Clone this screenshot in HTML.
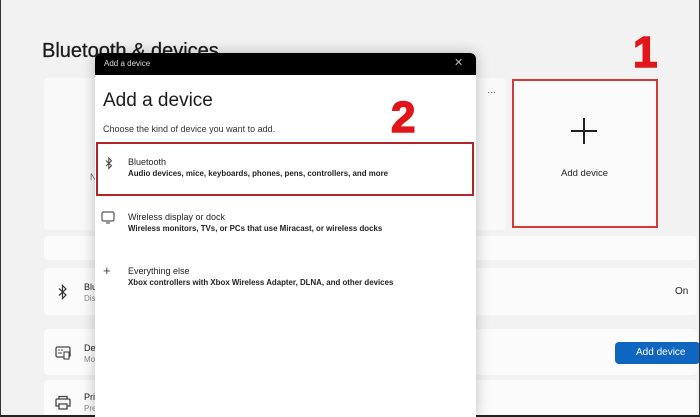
<!DOCTYPE html>
<html><head><style>
*{margin:0;padding:0;box-sizing:border-box}
body{width:700px;height:417px;overflow:hidden;background:#f2f2f2;font-family:"Liberation Sans",sans-serif;position:relative;color:#1b1b1b}
.a{position:absolute}
.card{position:absolute;background:#fbfbfb;border-radius:4px}
.sub{font-size:7.9px;font-weight:bold;color:#222}
.t{font-size:9px;color:#222}
.num{font-size:44px;font-weight:900;color:#e0161b;-webkit-text-stroke:1.5px #e0161b}
</style></head><body>
<div class="a" style="left:42px;top:40px;font-size:20px;color:#1b1b1b;-webkit-text-stroke:0.3px #1b1b1b">Bluetooth &amp; devices</div>
<div class="card" style="left:44px;top:78px;width:462px;height:152px;background:#f9f9f9"></div>
<div class="a" style="left:487px;top:87px;font-size:9px;color:#555">···</div>
<div class="a" style="left:90px;top:172px;font-size:9px;color:#666">N</div>
<div class="a" style="left:512px;top:79px;width:146px;height:149px;background:#fafafa;border:2px solid #d23b3b"></div>
<div class="a" style="left:571px;top:130px;width:26px;height:2px;background:#222"></div>
<div class="a" style="left:583px;top:118px;width:2px;height:26px;background:#222"></div>
<div class="a" style="left:561px;top:168px;font-size:9.5px;color:#222">Add device</div>
<div class="a num" style="left:633px;top:28px">1</div>
<div class="card" style="left:44px;top:236px;width:653px;height:24px"></div>
<div class="card" style="left:44px;top:268px;width:653px;height:47px"></div>
<div class="card" style="left:44px;top:329px;width:653px;height:46px"></div>
<div class="card" style="left:44px;top:380px;width:653px;height:37px"></div>
<svg class="a" style="left:58px;top:284px" width="10" height="16" viewBox="0 0 10 16"><path d="M1 4.5 L8 11 L4.5 14.5 V1.5 L8 5 L1 11.5" fill="none" stroke="#333" stroke-width="1.2"/></svg>
<div class="a" style="left:84px;top:282px;font-size:9px">Blu</div>
<div class="a" style="left:84px;top:294px;font-size:8px;color:#888">Dis</div>
<svg class="a" style="left:55px;top:346px" width="16" height="14" viewBox="0 0 16 14"><rect x="1" y="1" width="14" height="10" rx="1.5" fill="none" stroke="#444" stroke-width="1.3"/><rect x="9" y="6" width="5" height="7" fill="#fff" stroke="#444" stroke-width="1.1"/><path d="M3 4h2M6 4h2M3 7h4" stroke="#444"/></svg>
<div class="a" style="left:84px;top:343px;font-size:9px">De</div>
<div class="a" style="left:84px;top:355px;font-size:8px;color:#888">Mo</div>
<svg class="a" style="left:55px;top:395px" width="16" height="15" viewBox="0 0 16 15"><path d="M4 4V1.5h8V4M2 4h12a1 1 0 0 1 1 1v6h-3M4 11H1V5a1 1 0 0 1 1-1M4 9h8v5H4z" fill="none" stroke="#444" stroke-width="1.3"/></svg>
<div class="a" style="left:84px;top:392px;font-size:9px">Pri</div>
<div class="a" style="left:84px;top:404px;font-size:8px;color:#888">Pre</div>
<div class="a" style="left:675px;top:286px;font-size:10px;color:#222">On</div>
<div class="a" style="left:615px;top:342px;width:85px;height:22px;background:#0f66c0;border-radius:4px;color:#fff;font-size:10px;padding:5px 0 0 21px">Add device</div>
<div class="a" style="left:0;top:0;width:700px;height:417px;border-left:1px solid #333;border-right:1px solid #333;border-bottom:2px solid #222"></div>
<div class="a" style="left:95px;top:53px;width:381px;height:364px;background:#fff;border-radius:6px 6px 0 0;box-shadow:0 0 14px rgba(0,0,0,.25);overflow:hidden">
 <div style="height:22px;background:#000;color:#ddd;font-size:8px;padding:6px 0 0 9px">Add a device<span style="position:absolute;left:359px;top:3px;font-size:11px;color:#bbb">✕</span></div>
 <div class="a" style="left:8px;top:37px;font-size:19px;color:#1b1b1b">Add a device</div>
 <div class="a" style="left:8px;top:71px;font-size:9px;color:#333">Choose the kind of device you want to add.</div>
 <div class="a" style="left:1px;top:89px;width:378px;height:54px;border:2px solid #b3232a"></div>
 <svg class="a" style="left:10px;top:104px" width="8" height="13" viewBox="0 0 8 13"><path d="M1 3.5 L6.5 8.8 L3.8 11.5 V1 L6.5 3.8 L1 9" fill="none" stroke="#444" stroke-width="1"/></svg>
 <div class="a" style="left:33px;top:104px"><div class="t">Bluetooth</div><div class="sub" style="margin-top:2px">Audio devices, mice, keyboards, phones, pens, controllers, and more</div></div>
 <svg class="a" style="left:6px;top:158px" width="14" height="13" viewBox="0 0 14 13"><rect x="1" y="1" width="12" height="9" rx="1.5" fill="none" stroke="#555" stroke-width="1.2"/><path d="M5 12h4" stroke="#555" stroke-width="1.2"/></svg>
 <div class="a" style="left:33px;top:159px"><div class="t">Wireless display or dock</div><div class="sub" style="margin-top:2px">Wireless monitors, TVs, or PCs that use Miracast, or wireless docks</div></div>
 <div class="a" style="left:8px;top:210px;font-size:13px;color:#444">+</div>
 <div class="a" style="left:33px;top:213px"><div class="t">Everything else</div><div class="sub" style="margin-top:2px">Xbox controllers with Xbox Wireless Adapter, DLNA, and other devices</div></div>
 <div class="a num" style="left:296px;top:40px">2</div>
</div>
</body></html>
